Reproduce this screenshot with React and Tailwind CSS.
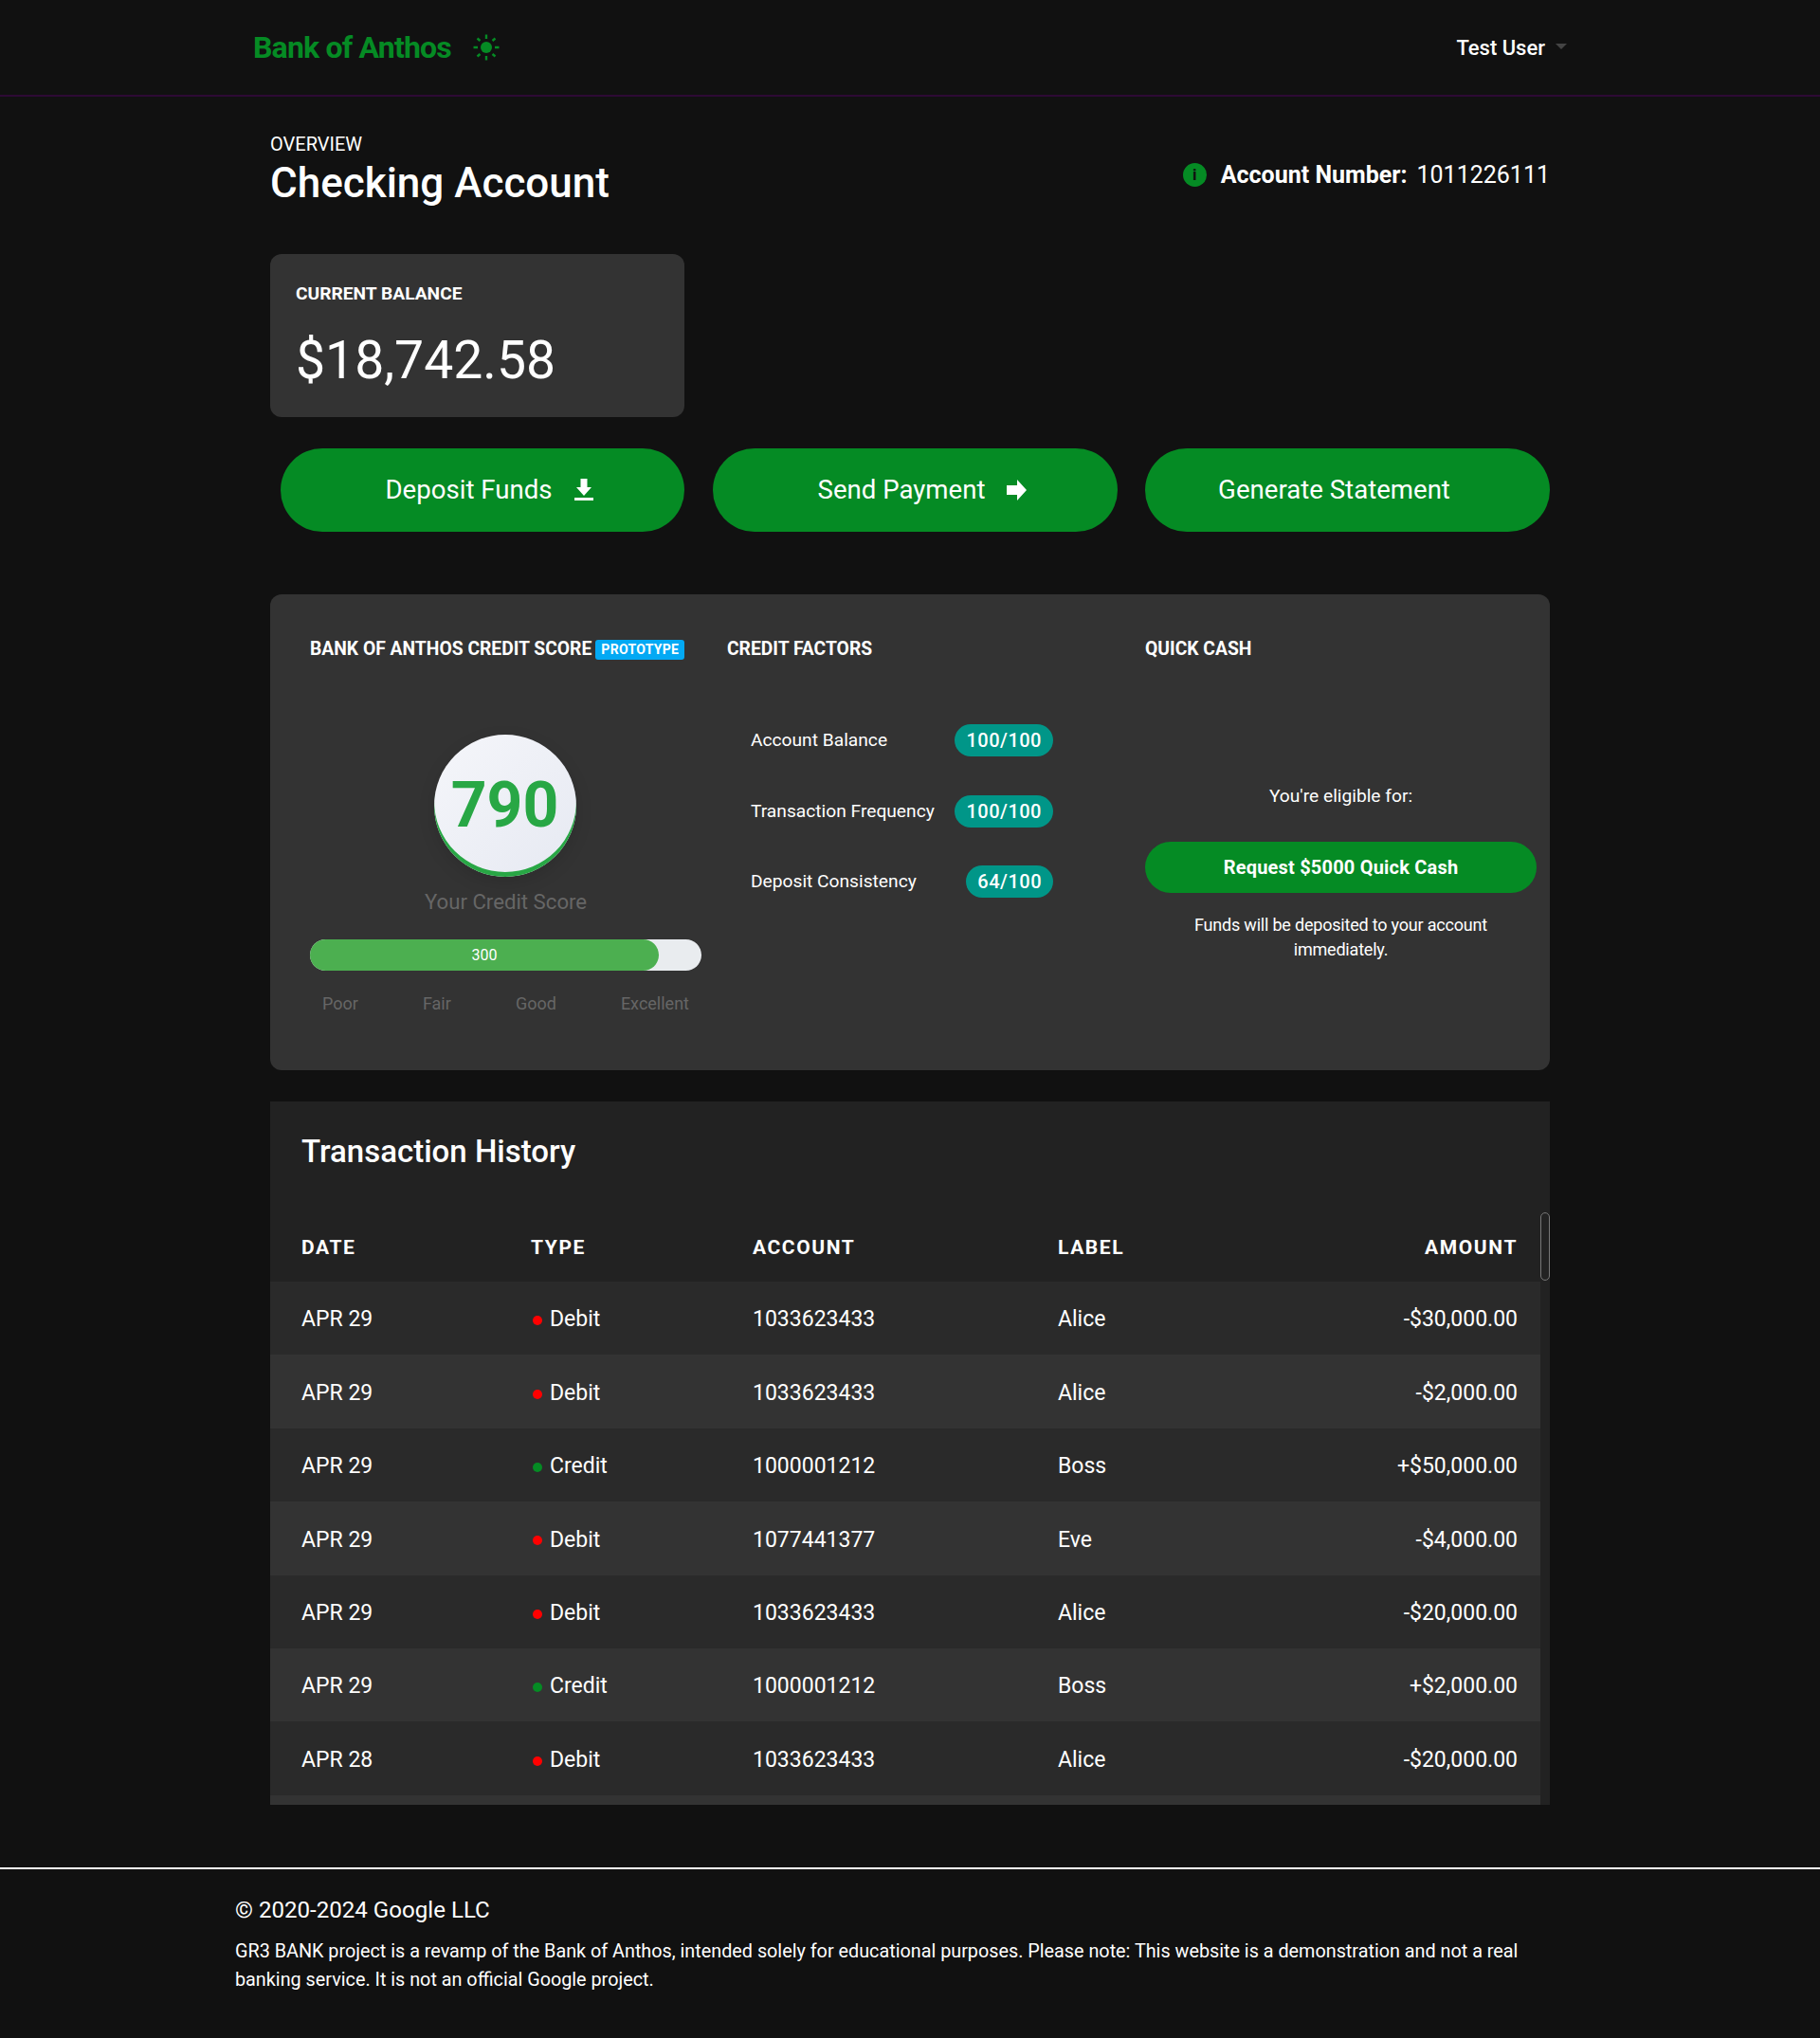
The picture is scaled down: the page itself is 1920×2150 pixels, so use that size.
import React from "react";

const rows = [
  ["APR 29", "Debit", "1033623433", "Alice", "-$30,000.00"],
  ["APR 29", "Debit", "1033623433", "Alice", "-$2,000.00"],
  ["APR 29", "Credit", "1000001212", "Boss", "+$50,000.00"],
  ["APR 29", "Debit", "1077441377", "Eve", "-$4,000.00"],
  ["APR 29", "Debit", "1033623433", "Alice", "-$20,000.00"],
  ["APR 29", "Credit", "1000001212", "Boss", "+$2,000.00"],
  ["APR 28", "Debit", "1033623433", "Alice", "-$20,000.00"],
];

function Sun() {
  return (
    <svg width="30" height="30" viewBox="0 0 30 30" fill="none" stroke="#058b24" strokeWidth="2.4">
      <circle cx="15" cy="15" r="6" fill="#058b24" stroke="none" />
      <path d="M15 1.5v4.5M15 24v4.5M1.5 15H6M24 15h4.5M5.5 5.5l3 2.5M24.5 5.5l-3 2.5M5.5 24.5l3-2.5M24.5 24.5l-3-2.5" />
    </svg>
  );
}

function Pill({ children, className }) {
  return (
    <div className={`flex h-[88px] items-center justify-center gap-[23px] rounded-full bg-[#058b24] text-[27.6px] text-white ${className}`}>
      {children}
    </div>
  );
}

function Factor({ label, value }) {
  return (
    <div className="flex h-[35px] items-center justify-between pl-[25px]">
      <span className="text-[19.2px] text-white">{label}</span>
      <span className="flex h-[34px] items-center rounded-full bg-[#009688] px-[12px] text-[20px] font-medium tracking-[0.5px] text-white">{value}</span>
    </div>
  );
}

export default function App() {
  return (
    <div className="min-h-[2150px] bg-[#111111] font-['Roboto',sans-serif] text-white">
      <nav className="h-[102px] border-b-2 border-[#2d0a35]">
        <div className="mx-auto flex h-[100px] w-[1386px] items-center justify-between">
          <div className="flex items-center gap-[22px]">
            <span className="text-[32px] font-bold tracking-[-0.8px] text-[#058b24]">Bank of Anthos</span>
            <Sun />
          </div>
          <div className="flex items-center gap-[11px] pr-[0px]">
            <span className="text-[22px] font-medium">Test User</span>
            <span className="mb-[3px] h-0 w-0 border-x-[6px] border-t-[6px] border-x-transparent border-t-[#444444]" />
          </div>
        </div>
      </nav>

      <main className="mx-auto w-[1350px]">
        <div className="flex items-start justify-between pt-[37px]">
          <div>
            <div className="h-[26px] text-[20px] leading-[26px]">OVERVIEW</div>
            <h1 className="text-[44px] leading-[56px] font-medium">Checking Account</h1>
          </div>
          <div className="flex items-center pt-[27px]">
            <span className="flex h-[25px] w-[25px] items-center justify-center rounded-full bg-[#058b24] text-[17px] leading-none font-bold text-[#111111]">i</span>
            <span className="ml-[15px] text-[25px] font-bold">Account Number:</span>
            <span className="ml-[10px] text-[25px]">1011226111</span>
          </div>
        </div>

        <section className="mt-[47px] h-[172px] w-[437px] rounded-[12px] bg-[#333333] pt-[29px] pl-[27px]">
          <div className="text-[19.2px] leading-[26px] font-bold">CURRENT BALANCE</div>
          <div className="mt-[23px] text-[55.3px] leading-[70px]">$18,742.58</div>
        </section>

        <div className="mt-[33px] grid grid-cols-[426px_427px_427px] gap-x-[29.5px] pl-[11px]">
          <Pill className="pl-[14px]">
            <span>Deposit Funds</span>
            <svg width="20" height="24" viewBox="0 0 20 24" fill="white"><path d="M6.500 0h7v9H18l-8 9-8-9h4.500zM0 20h20v3H0z" /></svg>
          </Pill>
          <Pill className="pl-[17px]">
            <span>Send Payment</span>
            <svg width="22" height="24" viewBox="0 0 22 24" fill="white"><path d="M0 7h11V1l10 11-10 11v-6H0z" /></svg>
          </Pill>
          <Pill className="pr-[28px]">
            <span>Generate Statement</span>
          </Pill>
        </div>

        <section className="mt-[66px] grid h-[502px] grid-cols-[482px_441px_1fr] rounded-[12px] bg-[#333333]">
          <div className="flex flex-col items-center pt-[44px] pr-[27px] pl-[42px]">
            <div className="flex w-full items-center whitespace-nowrap">
              <span className="text-[19.3px] font-bold">BANK OF ANTHOS CREDIT SCORE</span>
              <span className="ml-[4px] flex h-[21px] items-center rounded-[3px] bg-[#03a9f4] px-[6px] text-[14px] font-bold tracking-[0.3px]">PROTOTYPE</span>
            </div>
            <div className="mt-[75px] mr-[2px] flex h-[150px] w-[150px] items-center justify-center rounded-full bg-gradient-to-br from-[#f5f6fa] to-[#e6e9f2] text-[66px] font-bold text-[#28a745] shadow-[inset_0_-5px_0_#28a745,0_6px_18px_rgba(0,0,0,0.12)]">
              790
            </div>
            <div className="mt-[10px] text-[22.2px] text-[#666666]">Your Credit Score</div>
            <div className="relative mt-[23px] h-[33px] w-[413px] rounded-full bg-[#e9ecef]">
              <div className="flex h-full w-[368px] items-center justify-center rounded-full bg-[#4caf50] text-[16px]">300</div>
            </div>
            <div className="mt-[21px] flex w-[413px] justify-between px-[13px] text-[18px] text-[#666666]">
              <span>Poor</span>
              <span>Fair</span>
              <span>Good</span>
              <span>Excellent</span>
            </div>
          </div>
          <div className="pt-[44px] pr-[97px]">
            <div className="text-[19.3px] font-bold">CREDIT FACTORS</div>
            <div className="mt-[64px] flex flex-col gap-[39.5px]">
              <Factor label="Account Balance" value="100/100" />
              <Factor label="Transaction Frequency" value="100/100" />
              <Factor label="Deposit Consistency" value="64/100" />
            </div>
          </div>
          <div className="pt-[44px] pr-[14px]">
            <div className="text-[19.3px] font-bold">QUICK CASH</div>
            <div className="mt-[126px] text-center text-[19.2px]">You're eligible for:</div>
            <div className="mt-[33px] flex h-[54px] items-center justify-center rounded-full bg-[#058b24] text-[20px] font-bold tracking-[0.2px]">Request $5000 Quick Cash</div>
            <div className="mx-auto mt-[21px] w-[340px] text-center text-[18px] leading-[26px] tracking-[-0.2px]">Funds will be deposited to your account immediately.</div>
          </div>
        </section>

        <section className="relative mt-[33px] h-[742px] overflow-hidden bg-[#222222]">
          <h2 className="pt-[33px] pl-[33px] text-[33px] leading-[40px] font-medium">Transaction History</h2>
          <div className="mt-[45px] mr-[10px]">
            <div className="grid h-[72px] grid-cols-[242px_234px_322px_1fr_auto] items-center pt-[2px] pr-[24px] pl-[33px] text-[21px] font-bold tracking-[1.6px]">
              <span>DATE</span>
              <span>TYPE</span>
              <span>ACCOUNT</span>
              <span>LABEL</span>
              <span>AMOUNT</span>
            </div>
            {rows.map((r, i) => (
              <div key={i} className={`grid h-[77.4px] grid-cols-[242px_234px_322px_1fr_auto] items-center pt-[4px] pr-[24px] pl-[33px] text-[23px] ${i % 2 === 0 ? "bg-[#2a2a2a]" : "bg-[#333333]"}`}>
                <span>{r[0]}</span>
                <span className="flex items-center">
                  <span className={`mt-[1px] ml-[2px] h-[10px] w-[10px] rounded-full ${r[1] === "Debit" ? "bg-[#ff0000]" : "bg-[#058b24]"}`} />
                  <span className="ml-[8px]">{r[1]}</span>
                </span>
                <span>{r[2]}</span>
                <span>{r[3]}</span>
                <span className="text-right">{r[4]}</span>
              </div>
            ))}
            <div className="h-[20px] bg-[#333333]" />
          </div>
          <div className="absolute top-[117px] right-0 h-[72px] w-[10px] rounded-[5px] border border-[#777777] bg-[#222222]" />
        </section>
      </main>

      <footer className="mt-[66px] border-t-2 border-white pt-[27px]">
        <div className="mx-auto w-[1424px]">
          <div className="text-[24.1px] leading-[32px]">© 2020-2024 Google LLC</div>
          <p className="mt-[13px] text-[19.8px] leading-[30px]">GR3 BANK project is a revamp of the Bank of Anthos, intended solely for educational purposes. Please note: This website is a demonstration and not a real banking service. It is not an official Google project.</p>
        </div>
      </footer>
    </div>
  );
}
